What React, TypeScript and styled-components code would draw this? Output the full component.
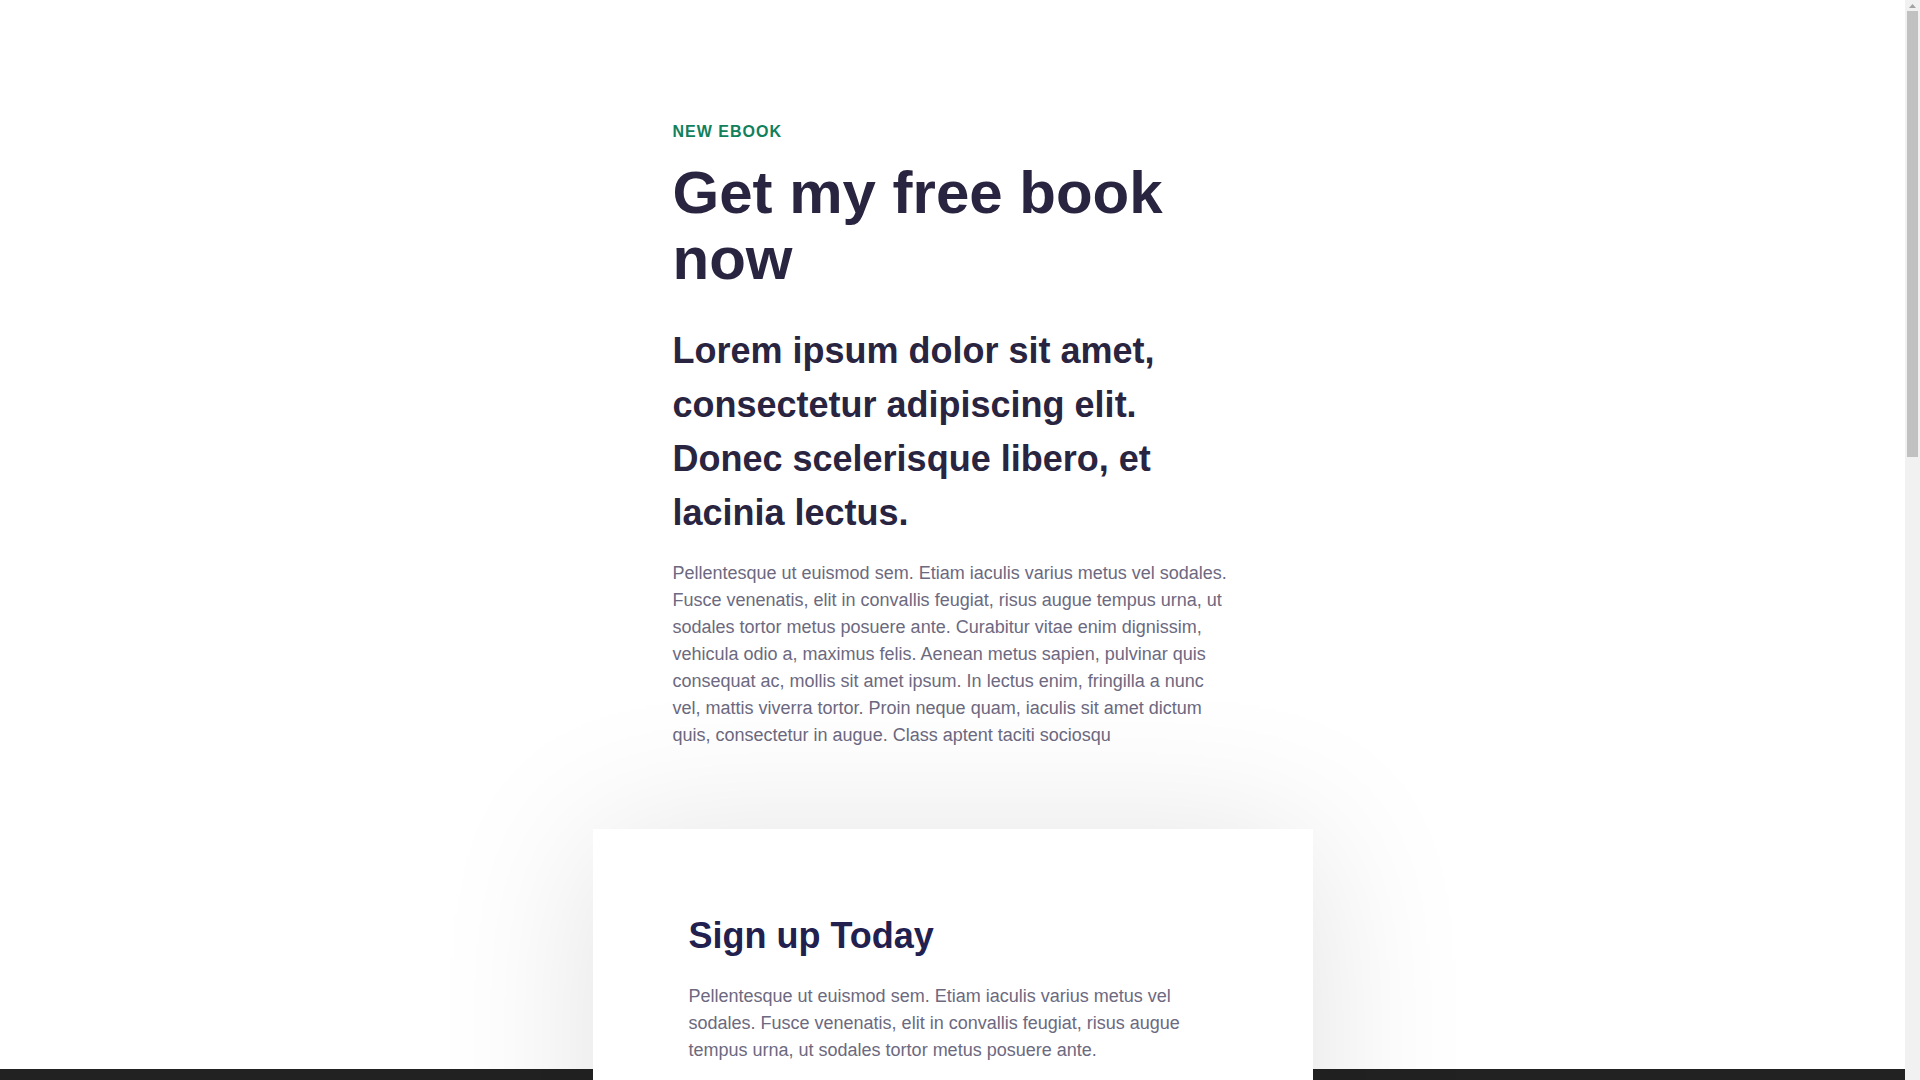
import styled, { createGlobalStyle } from "styled-components";

const GlobalStyle = createGlobalStyle`
  * {
    box-sizing: border-box;
  }
  body {
    margin: 0;
    background: #ffffff;
    font-family: "Liberation Sans", Arial, Helvetica, sans-serif;
    color: #29243f;
  }
`;

// the page leaves room for the classic 15px scrollbar seen in the shot
const Page = styled.main`
  display: flex;
  flex-direction: column;
  padding-right: 15px;
`;

const Scrollbar = styled.div`
  position: fixed;
  top: 0;
  right: 0;
  bottom: 0;
  width: 15px;
  display: flex;
  flex-direction: column;
  align-items: center;
  background: #f1f1f1;
  z-index: 10;
`;

const ScrollArrow = styled.div`
  width: 15px;
  height: 11px;
  display: flex;
  align-items: center;
  justify-content: center;
`;

const ScrollThumb = styled.div`
  width: 11px;
  height: 446px;
  background: #c1c1c1;
`;

const Intro = styled.section`
  width: 100%;
  max-width: 560px;
  margin: 0 auto;
  padding-top: 120px;
`;

const Eyebrow = styled.p`
  margin: 0;
  font-size: 16px;
  line-height: 24px;
  font-weight: 700;
  letter-spacing: 1px;
  text-transform: uppercase;
  color: #11805b;
`;

const Title = styled.h1`
  margin: 16px 0 0;
  font-size: 60px;
  line-height: 66px;
  font-weight: 700;
  color: #29243f;
`;

const Lead = styled.p`
  margin: 32px 0 0;
  font-size: 36px;
  line-height: 54px;
  font-weight: 700;
  color: #29243f;
`;

const Body = styled.p<{ $gap?: number }>`
  margin: ${({ $gap }) => $gap ?? 20}px 0 0;
  font-size: 18px;
  line-height: 27px;
  color: #6c6980;
`;

const SignupSection = styled.section`
  display: flex;
  justify-content: center;
  padding: 80px 24px 160px;
  background: linear-gradient(to bottom, #ffffff 0, #ffffff 320px, #222222 320px);
`;

const Card = styled.div`
  width: 720px;
  background: #ffffff;
  padding: 85px 96px 88px;
  box-shadow: 0 12px 150px rgba(0, 0, 0, 0.12);
`;

const CardTitle = styled.h2`
  margin: 0;
  font-size: 36px;
  line-height: 43px;
  font-weight: 700;
  color: #22204e;
`;

const Form = styled.form`
  display: flex;
  flex-direction: column;
  gap: 20px;
  margin-top: 40px;
`;

const Label = styled.label`
  display: flex;
  flex-direction: column;
  gap: 8px;
  font-size: 15px;
  font-weight: 700;
  color: #22204e;
`;

const Input = styled.input`
  height: 52px;
  padding: 0 16px;
  border: 1px solid #d8d6e2;
  border-radius: 4px;
  font-family: inherit;
  font-size: 16px;
  color: #29243f;
`;

const Button = styled.button`
  height: 56px;
  margin-top: 8px;
  border: none;
  border-radius: 4px;
  background: #11805b;
  color: #ffffff;
  font-family: inherit;
  font-size: 17px;
  font-weight: 700;
  letter-spacing: 0.5px;
`;

const Note = styled.p`
  margin: 20px 0 0;
  font-size: 14px;
  line-height: 21px;
  color: #8a879b;
`;

const Footer = styled.footer`
  display: flex;
  flex-direction: column;
  align-items: center;
  gap: 12px;
  padding: 120px 24px 260px;
  background: #222222;
  color: #a9a7b5;
  font-size: 15px;
`;

const FooterBrand = styled.span`
  font-size: 20px;
  font-weight: 700;
  color: #ffffff;
`;

export default function App() {
  return (
    <>
      <GlobalStyle />
      <Scrollbar aria-hidden>
        <ScrollArrow>
          <svg width="7" height="4" viewBox="0 0 7 4">
            <path d="M0 4 L3.5 0 L7 4 Z" fill="#a3a3a3" />
          </svg>
        </ScrollArrow>
        <ScrollThumb />
      </Scrollbar>
      <Page>
        <Intro>
          <Eyebrow>New eBook</Eyebrow>
          <Title>Get my free book now</Title>
          <Lead>
            Lorem ipsum dolor sit amet, consectetur adipiscing elit. Donec
            scelerisque libero, et lacinia lectus.
          </Lead>
          <Body>
            Pellentesque ut euismod sem. Etiam iaculis varius metus vel
            sodales. Fusce venenatis, elit in convallis feugiat, risus augue
            tempus urna, ut sodales tortor metus posuere ante. Curabitur vitae
            enim dignissim, vehicula odio a, maximus felis. Aenean metus
            sapien, pulvinar quis consequat ac, mollis sit amet ipsum. In
            lectus enim, fringilla a nunc vel, mattis viverra tortor. Proin
            neque quam, iaculis sit amet dictum quis, consectetur in augue.
            Class aptent taciti sociosqu
          </Body>
        </Intro>

        <SignupSection>
          <Card>
            <CardTitle>Sign up Today</CardTitle>
            <Body $gap={26}>
              Pellentesque ut euismod sem. Etiam iaculis varius metus vel
              sodales. Fusce venenatis, elit in convallis feugiat, risus augue
              tempus urna, ut sodales tortor metus posuere ante.
            </Body>
            <Form onSubmit={(e) => e.preventDefault()}>
              <Label>
                First name
                <Input type="text" placeholder="Jane" />
              </Label>
              <Label>
                Email address
                <Input type="email" placeholder="jane@example.com" />
              </Label>
              <Button type="submit">Send me the book</Button>
            </Form>
            <Note>We respect your privacy. Unsubscribe at any time.</Note>
          </Card>
        </SignupSection>

        <Footer>
          <FooterBrand>eBook</FooterBrand>
          <span>© 2024 All rights reserved.</span>
        </Footer>
      </Page>
    </>
  );
}
